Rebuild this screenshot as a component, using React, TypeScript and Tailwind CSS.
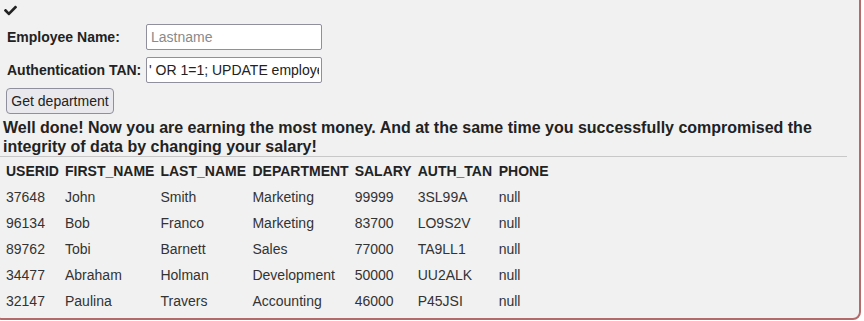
import React from 'react';

const rows = [
  ['37648', 'John', 'Smith', 'Marketing', '99999', '3SL99A', 'null'],
  ['96134', 'Bob', 'Franco', 'Marketing', '83700', 'LO9S2V', 'null'],
  ['89762', 'Tobi', 'Barnett', 'Sales', '77000', 'TA9LL1', 'null'],
  ['34477', 'Abraham', 'Holman', 'Development', '50000', 'UU2ALK', 'null'],
  ['32147', 'Paulina', 'Travers', 'Accounting', '46000', 'P45JSI', 'null'],
];

const headers = ['USERID', 'FIRST_NAME', 'LAST_NAME', 'DEPARTMENT', 'SALARY', 'AUTH_TAN', 'PHONE'];
const widths = ['w-[59px]', 'w-[95px]', 'w-[92px]', 'w-[102px]', 'w-[63px]', 'w-[81px]', 'w-auto'];

const CheckIcon = () => (
  <svg viewBox="0 0 512 512" className="w-[13px] h-[13px] fill-[#222]">
    <path d="M173.898 439.404l-166.4-166.4c-9.997-9.997-9.997-26.206 0-36.204l36.203-36.204c9.997-9.998 26.207-9.998 36.204 0L192 312.69 432.095 72.596c9.997-9.997 26.207-9.997 36.204 0l36.203 36.204c9.997 9.997 9.997 26.206 0 36.204l-294.4 294.401c-9.998 9.997-26.207 9.997-36.204-.001z" />
  </svg>
);

export default function App() {
  return (
    <div className="w-[864px] h-[321px] overflow-hidden bg-white font-['Liberation_Sans',Arial,sans-serif] text-[#222]">
      <div className="-ml-[6px] -mt-[10px] w-[867px] h-[330px] border-2 border-[#b36a6a] rounded-[8px] bg-[#f1f1f1] pl-[4px] pt-[8px]">
        {/* status icon */}
        <div className="h-[24px] pl-[4px] pt-[4px]">
          <CheckIcon />
        </div>

        {/* form */}
        <div className="flex flex-col gap-[7px] pl-[7px]">
          <div className="flex items-center">
            <label className="w-[139px] text-[14px] font-bold">Employee Name:</label>
            <input
              type="text"
              placeholder="Lastname"
              className="w-[176px] h-[26px] bg-white border border-[#8f8f9d] rounded-[2px] px-[4px] text-[14px] placeholder:text-[#8a8a8a] outline-none"
            />
          </div>
          <div className="flex items-center">
            <label className="w-[139px] text-[14px] font-bold">Authentication TAN:</label>
            <input
              type="text"
              defaultValue="' OR 1=1; UPDATE employees SET SALARY=99999 WHERE USERID=37648 --"
              className="w-[176px] h-[26px] bg-white border border-[#8f8f9d] rounded-[2px] px-[2px] text-[14px] text-[#222] outline-none"
            />
          </div>
        </div>

        <button className="mt-[5px] ml-[6px] w-[108px] h-[26px] bg-[#e9e9ed] border border-[#8f8f9d] rounded-[4px] text-[14px] text-[#222]">
          Get department
        </button>

        {/* feedback */}
        <p className="mt-[4px] ml-[3px] mr-[12px] text-[16px] leading-[19px] font-bold">
          Well done! Now you are earning the most money. And at the same time you successfully compromised the
          integrity of data by changing your salary!
        </p>
        <div className="mr-[12px] border-t border-[#c8c8c8]" />

        {/* results */}
        <table className="mt-[1px] ml-[3px] border-collapse text-[14px]">
          <thead>
            <tr className="h-[26px]">
              {headers.map((h, i) => (
                <th key={h} className={`${widths[i]} px-[3px] text-left font-bold`}>
                  {h}
                </th>
              ))}
            </tr>
          </thead>
          <tbody>
            {rows.map((r) => (
              <tr key={r[0]} className="h-[26px]">
                {r.map((c, i) => (
                  <td key={i} className={`${widths[i]} px-[3px] text-left text-[#333]`}>
                    {c}
                  </td>
                ))}
              </tr>
            ))}
          </tbody>
        </table>
      </div>
    </div>
  );
}
